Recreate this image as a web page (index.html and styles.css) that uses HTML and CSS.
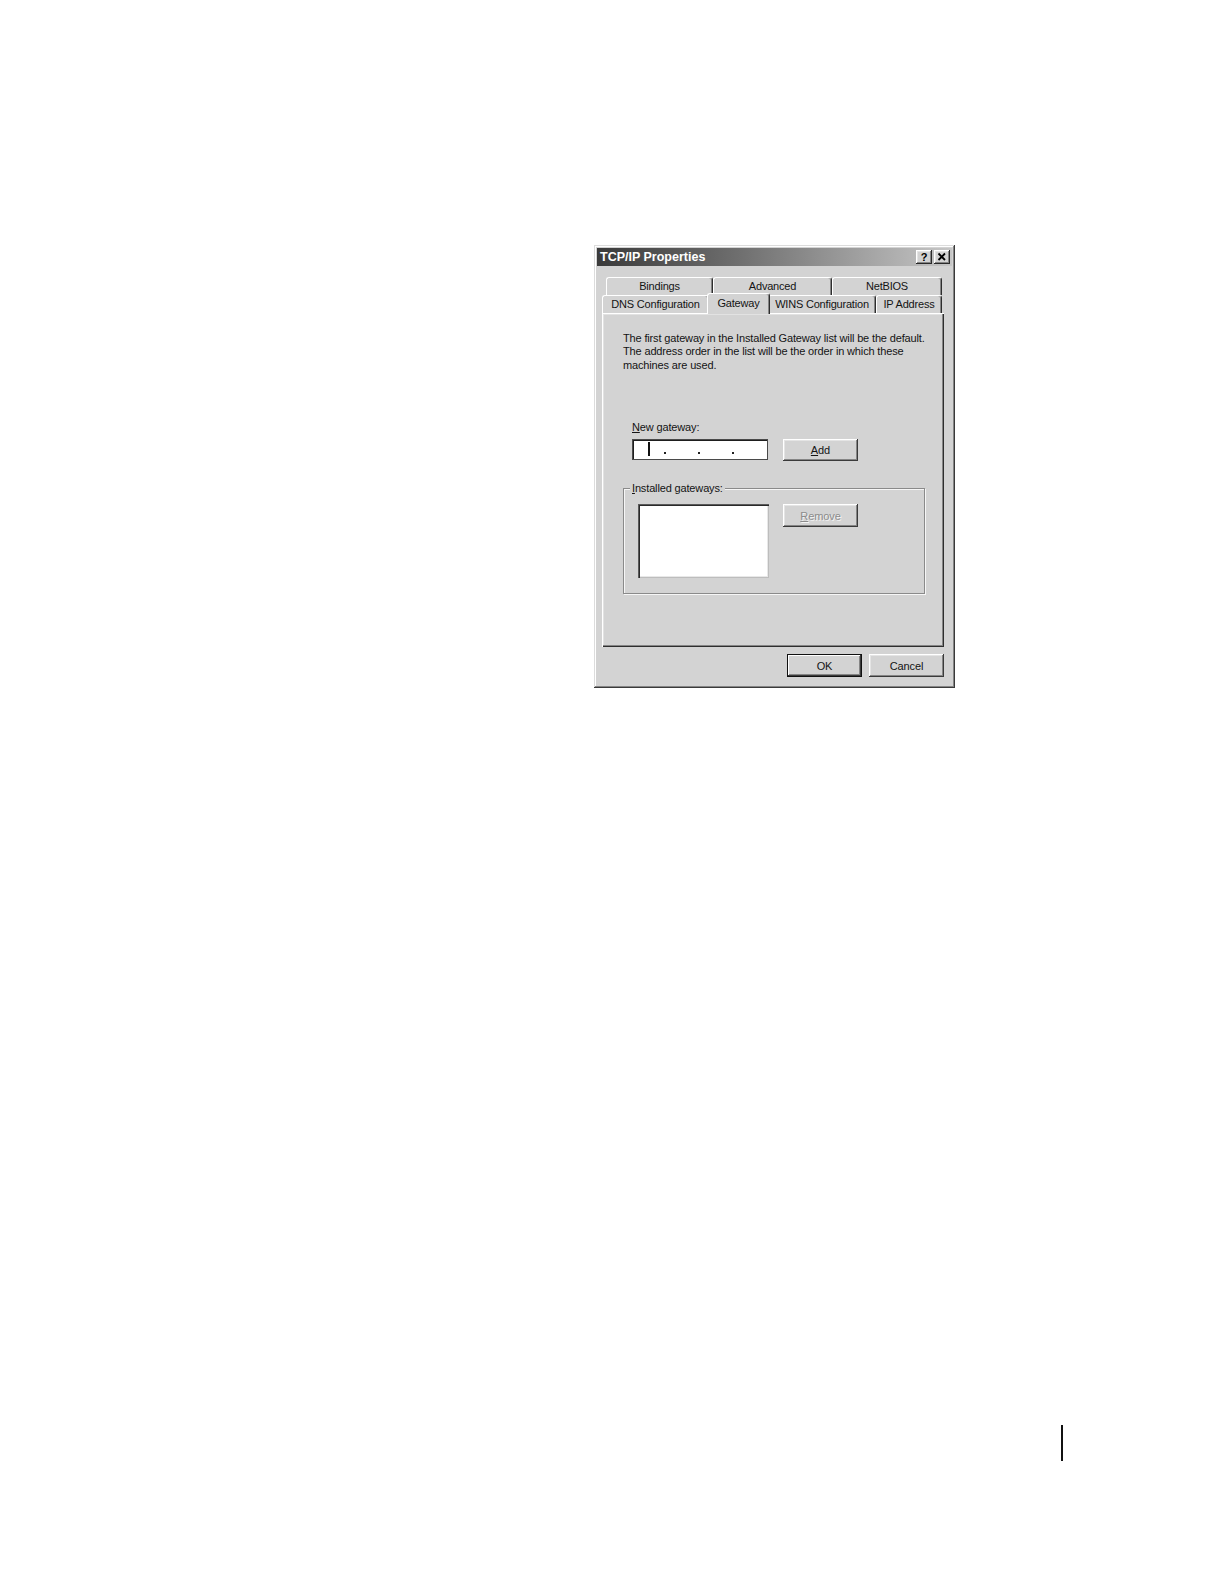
FILE: index.html
```html
<!DOCTYPE html>
<html lang="en">
<head>
<meta charset="utf-8">
<title>TCP/IP Properties</title>
<link rel="stylesheet" href="styles.css">
</head>
<body>
<main class="page">
  <div class="window">
    <div class="titlebar">
      <span class="title">TCP/IP Properties</span>
      <div class="title-buttons">
        <span class="tbtn help">?</span>
        <span class="tbtn close">
          <svg width="16" height="14" viewBox="0 0 16 14"><path d="M4.5 3.5 L11 10 M11 3.5 L4.5 10" stroke="#000" stroke-width="1.8" fill="none"/></svg>
        </span>
      </div>
    </div>
    <div class="wbody">
      <div class="tabrow back">
        <div class="tab w-bind">Bindings</div>
        <div class="tab w-adv">Advanced</div>
        <div class="tab w-net">NetBIOS</div>
      </div>
      <div class="tabrow front">
        <div class="tab w-dns">DNS Configuration</div>
        <div class="tab active w-gw">Gateway</div>
        <div class="tab w-wins">WINS Configuration</div>
        <div class="tab w-ip">IP Address</div>
      </div>
      <div class="panel">
        <p class="intro">The first gateway in the Installed Gateway list will be the default.<br>The address order in the list will be the order in which these<br>machines are used.</p>
        <div class="gw">
          <div class="label"><u>N</u>ew gateway:</div>
          <div class="gw-row">
            <div class="ipfield">
              <span class="caret"></span>
              <span class="dot d1"></span>
              <span class="dot"></span>
              <span class="dot"></span>
            </div>
            <div class="btn add"><span><u>A</u>dd</span></div>
          </div>
        </div>
        <div class="group">
          <div class="group-label"><u>I</u>nstalled gateways:</div>
          <div class="group-body">
            <div class="listbox"></div>
            <div class="btn disabled"><span><u>R</u>emove</span></div>
          </div>
        </div>
      </div>
      <div class="actions">
        <div class="btn default">OK</div>
        <div class="btn">Cancel</div>
      </div>
    </div>
  </div>
  <div class="folio-rule"></div>
</main>
</body>
</html>
```

FILE: styles.css
```css
html, body {
  margin: 0;
  padding: 0;
  background: #ffffff;
}

body {
  font-family: "Liberation Sans", Arial, sans-serif;
  font-size: 11px;
  color: #141414;
}

.page {
  padding-top: 245px;
  min-height: 1584px;
  box-sizing: border-box;
}

.window {
  margin-left: 594px;
  width: 361px;
  height: 443px;
  box-sizing: border-box;
  padding: 3px;
  background: #d3d3d3;
  box-shadow: inset -1px -1px #3a3a3a, inset 1px 1px #dcdcdc, inset -2px -2px #858585, inset 2px 2px #ffffff;
}

.titlebar {
  height: 18px;
  display: flex;
  align-items: center;
  justify-content: space-between;
  padding: 0 2px 0 3px;
  background: linear-gradient(90deg, #3a3a3a 0%, #6f6f6f 40%, #c6c6c6 100%);
}

.title {
  color: #ffffff;
  font-weight: bold;
  font-size: 12.5px;
}

.title-buttons {
  display: flex;
  gap: 2px;
}

.tbtn {
  width: 16px;
  height: 14px;
  box-sizing: border-box;
  display: flex;
  align-items: center;
  justify-content: center;
  background: #d3d3d3;
  box-shadow: inset -1px -1px #2a2a2a, inset 1px 1px #ffffff, inset -2px -2px #858585, inset 2px 2px #e4e4e4;
}

.tbtn.help {
  font-weight: bold;
  font-size: 11px;
  line-height: 14px;
  color: #000;
}

.tbtn svg {
  display: block;
}

.wbody {
  padding: 11px 8px 0 5px;
}

.tabrow {
  display: flex;
  height: 18px;
}

.tabrow.back {
  margin-left: 4px;
}

.tab {
  box-sizing: border-box;
  height: 18px;
  border-top: 1px solid #ffffff;
  border-left: 1px solid #ffffff;
  border-right: 1px solid #2e2e2e;
  box-shadow: inset -1px 0 #858585;
  border-radius: 3px 3px 0 0;
  text-align: center;
  line-height: 16px;
  white-space: nowrap;
  letter-spacing: -0.2px;
  background: #d3d3d3;
}

.w-bind { width: 107px; }
.w-adv { width: 119px; }
.w-net { width: 110px; }
.w-dns { width: 107px; }
.w-wins { width: 108px; }
.w-ip { width: 66px; }

.tab.active {
  width: 63px;
  height: 21px;
  margin: -2px -2px -1px -2px;
  position: relative;
  z-index: 1;
  line-height: 18px;
}

.panel {
  box-sizing: border-box;
  width: 342px;
  height: 334px;
  padding-top: 18.5px;
  background: #d3d3d3;
  box-shadow: inset 1px 1px #ffffff, inset -1px -1px #2e2e2e, inset -2px -2px #858585, inset 2px 2px #e2e2e2;
}

.intro {
  margin: 0 0 0 21px;
  line-height: 13.5px;
  letter-spacing: -0.15px;
  white-space: nowrap;
}

.gw {
  margin: 48.5px 0 0 30px;
}

.label {
  line-height: 13.5px;
  letter-spacing: -0.15px;
}

u {
  text-decoration: underline;
  text-underline-offset: 1px;
}

.gw-row {
  display: flex;
  align-items: flex-start;
  margin-top: 5px;
  gap: 15px;
}

.ipfield {
  box-sizing: border-box;
  width: 136px;
  height: 21px;
  background: #ffffff;
  border: 1px solid #4a4a4a;
  box-shadow: inset 1px 1px #1e1e1e;
  display: flex;
  align-items: flex-end;
  padding: 0 0 5px 15px;
}

.caret {
  width: 2px;
  height: 14px;
  background: #111;
  margin-bottom: -2px;
}

.dot {
  width: 2px;
  height: 2px;
  background: #222;
  margin-left: 32px;
}

.dot.d1 {
  margin-left: 14px;
}

.btn {
  box-sizing: border-box;
  width: 75px;
  height: 23px;
  display: flex;
  align-items: center;
  justify-content: center;
  background: #d3d3d3;
  letter-spacing: -0.1px;
  box-shadow: inset -1px -1px #3a3a3a, inset 1px 1px #ffffff, inset -2px -2px #858585, inset 2px 2px #e4e4e4;
}

.btn.add {
  height: 22px;
}

.btn.default {
  box-shadow: inset 0 0 0 1px #111111, inset -2px -2px #3a3a3a, inset 2px 2px #ffffff, inset -3px -3px #858585;
}

.btn.disabled {
  color: #8c8c8c;
  text-shadow: 1px 1px #f4f4f4;
}

.group {
  box-sizing: border-box;
  width: 302px;
  height: 106px;
  margin: 27px 0 0 21px;
  border: 1px solid #8a8a8a;
  box-shadow: inset 1px 1px #f6f6f6, 1px 1px #f6f6f6;
}

.group-label {
  display: block;
  width: fit-content;
  margin: -8px 0 0 6px;
  padding: 0 2px 0 2px;
  line-height: 14px;
  background: #d3d3d3;
  letter-spacing: -0.15px;
}

.group-body {
  display: flex;
  align-items: flex-start;
  gap: 14px;
  margin: 9px 0 0 14px;
}

.listbox {
  box-sizing: border-box;
  width: 131px;
  height: 74px;
  background: #ffffff;
  box-shadow: inset 1px 1px #5a5a5a, inset 2px 2px #2a2a2a, inset -1px -1px #bdbdbd, inset -2px -2px #e8e8e8;
}

.actions {
  display: flex;
  justify-content: flex-end;
  gap: 7px;
  margin-top: 7px;
}

.folio-rule {
  margin: 737px 0 0 1061px;
  width: 2px;
  height: 36px;
  background: #111111;
}
```
